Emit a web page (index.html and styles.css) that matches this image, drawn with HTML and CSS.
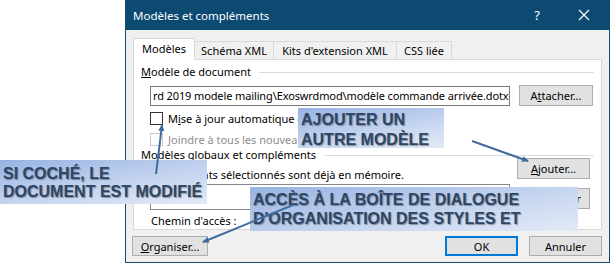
FILE: index.html
```html
<!DOCTYPE html>
<html lang="fr">
<head>
    <meta charset="UTF-8">
    <title>Modèles et compléments</title>
    <link rel="stylesheet" href="styles.css">
</head>
<body>
    <div class="dialog">
        <div class="titlebar">
            <span class="title">Modèles et compléments</span>
            <span class="help">?</span>
            <svg class="close" width="12" height="12" viewBox="0 0 12 12">
                <path d="M1 1 L11 11 M11 1 L1 11" stroke="#fff" stroke-width="1.2" fill="none"/>
            </svg>
        </div>

        <div class="tabs">
            <div class="tab active">Modèles</div>
            <div class="tab tab-xml">Schéma XML</div>
            <div class="tab tab-kits">Kits d'extension XML</div>
            <div class="tab tab-css">CSS liée</div>
        </div>

        <div class="panel">
            <div class="group-label"><span><u>M</u>odèle de document</span><div class="rule"></div></div>
            <div class="row-doc">
                <div class="textbox">rd 2019 modele mailing\Exoswrdmod\modèle commande arrivée.dotx</div>
                <button class="btn btn-attach">A<u>t</u>tacher...</button>
            </div>
            <label class="check"><span class="box"></span>M<u>i</u>se à jour automatique des styles de document</label>
            <label class="check disabled"><span class="box"></span>Joindre à tous les nouveaux messages électroniques</label>

            <div class="group-label second"><span>Mo<u>d</u>èles globaux et compléments</span><div class="rule"></div></div>
            <div class="globals">
                <div class="globals-left">
                    <div class="note">Les éléments sélectionnés sont déjà en mémoire.</div>
                    <div class="listbox"></div>
                    <div class="path">Chemin d'accès :</div>
                </div>
                <div class="globals-right">
                    <button class="btn"><u>A</u>jouter...</button>
                    <button class="btn btn-second">Supprimer</button>
                </div>
            </div>
        </div>

        <div class="footer">
            <button class="btn btn-organise"><u>O</u>rganiser...</button>
            <div class="spacer"></div>
            <button class="btn btn-ok">OK</button>
            <button class="btn">Annuler</button>
        </div>
    </div>

    <!-- bulles d'annotation -->
    <div class="callout callout-ajouter">AJOUTER UN<br>AUTRE MODÈLE</div>
    <div class="callout callout-coche">SI COCHÉ, LE<br>DOCUMENT EST MODIFIÉ</div>
    <div class="callout callout-acces">ACCÈS À LA BOÎTE DE DIALOGUE<br>D'ORGANISATION DES STYLES ET</div>

    <svg class="arrows" width="613" height="264" viewBox="0 0 613 264">
        <defs>
            <marker id="tip" markerWidth="7" markerHeight="6" refX="6" refY="3" orient="auto" markerUnits="userSpaceOnUse">
                <path d="M0 0 L7 3 L0 6 Z" fill="#3f6c9c"/>
            </marker>
        </defs>
        <line x1="156" y1="174" x2="162" y2="125" stroke="#3f6c9c" stroke-width="2" marker-end="url(#tip)"/>
        <line x1="472" y1="141" x2="528" y2="161" stroke="#3f6c9c" stroke-width="2" marker-end="url(#tip)"/>
        <line x1="293" y1="205" x2="203" y2="242" stroke="#3f6c9c" stroke-width="2" marker-end="url(#tip)"/>
    </svg>
</body>
</html>
```

FILE: styles.css
```css
body {
    margin: 0;
    width: 613px;
    height: 264px;
    overflow: hidden;
    position: relative;
    background-color: #fff;
    font-family: "Noto Sans", "Open Sans", sans-serif;
    font-size: 11px;
    color: #000;
}

.dialog {
    margin-left: 125px;
    width: 485px;
    height: 263px;
    box-sizing: border-box;
    border: 1px solid #1c4a6e;
    border-top: none;
    background-color: #f0f0f0;
}

.titlebar {
    height: 30px;
    background-color: #0d4a72;
    color: #fff;
    display: flex;
    align-items: center;
    padding-left: 8px;
    margin-left: -1px;
    margin-right: -1px;
}

.title {
    font-size: 11.5px;
    flex: 1;
}

.help {
    font-size: 13px;
    margin-right: 38px;
}

.close {
    margin-right: 20px;
}

.tabs {
    display: flex;
    align-items: flex-end;
    margin-top: 8px;
    margin-left: 7px;
    height: 21px;
    position: relative;
    z-index: 2;
}

.tab {
    height: 18px;
    box-sizing: border-box;
    border: 1px solid #d9d9d9;
    border-bottom: none;
    border-left: none;
    line-height: 17px;
    text-align: center;
    background-color: #f0f0f0;
}

.tab.active {
    height: 22px;
    width: 62px;
    margin-bottom: -1px;
    border-left: 1px solid #d9d9d9;
    background-color: #fff;
    line-height: 20px;
}

.tab-xml {
    width: 79px;
}

.tab-kits {
    width: 123px;
}

.tab-css {
    width: 55px;
}

.panel {
    margin: 0 7px;
    height: 171px;
    box-sizing: border-box;
    border: 1px solid #d9d9d9;
    background-color: #fff;
    padding: 0 7px;
}

.group-label {
    display: flex;
    align-items: center;
    height: 16px;
    line-height: 16px;
    margin-top: 4px;
}

.group-label.second {
    margin-top: 1px;
}

.rule {
    flex: 1;
    border-top: 1px solid #dcdcdc;
    margin-left: 8px;
    margin-top: 1px;
}

.row-doc {
    display: flex;
    margin-top: 5px;
    padding-left: 9px;
}

.textbox {
    width: 360px;
    height: 20px;
    box-sizing: border-box;
    margin-top: 1px;
    border: 1px solid #7a7a7a;
    padding-left: 2px;
    line-height: 18px;
    letter-spacing: -0.12px;
    white-space: nowrap;
    overflow: hidden;
}

.btn {
    font-family: inherit;
    font-size: 11px;
    width: 73px;
    height: 21px;
    padding: 0;
    background-color: #e1e1e1;
    border: 1px solid #adadad;
    color: #000;
}

.btn-attach {
    margin-left: 9px;
    width: 74px;
}

.check {
    display: flex;
    align-items: center;
    height: 13px;
    margin-top: 6px;
    padding-left: 9px;
    white-space: nowrap;
}

.check .box {
    width: 13px;
    height: 13px;
    box-sizing: border-box;
    border: 1px solid #333;
    margin-right: 5px;
    background-color: #fff;
}

.check.disabled {
    margin-top: 8px;
    color: #8d8d8d;
}

.check.disabled .box {
    border-color: #cccccc;
}

.globals {
    display: flex;
    margin-top: -5px;
    padding-left: 9px;
}

.globals-left {
    width: 360px;
}

.note {
    margin-top: 9px;
    height: 16px;
    line-height: 16px;
}

.listbox {
    margin-top: 1px;
    height: 26px;
    box-sizing: border-box;
    border: 1px solid #828790;
}

.path {
    margin-top: 3px;
    line-height: 16px;
    padding-left: 1px;
}

.globals-right {
    margin-left: 7px;
    display: flex;
    flex-direction: column;
}

.btn-second {
    margin-top: 9px;
}

.footer {
    display: flex;
    margin-top: 6px;
    padding: 0 7px 0 6px;
}

.footer .btn {
    height: 20px;
}

.btn-organise {
    width: 76px;
}

.spacer {
    flex: 1;
}

.btn-ok {
    border: 2px solid #0078d7;
    margin-right: 11px;
}

.callout {
    position: absolute;
    box-sizing: border-box;
    background: linear-gradient(170deg, #98b3e3 0%, #c4d4ef 55%, #e3eaf7 100%);
    font-family: "Liberation Sans", Arial, sans-serif;
    font-weight: bold;
    font-size: 16px;
    line-height: 19px;
    color: #2d4666;
    text-shadow: 1px 1px 1px rgba(0, 0, 0, 0.35);
    white-space: nowrap;
    overflow: hidden;
    padding-left: 3px;
    z-index: 5;
}

.callout-ajouter {
    left: 298px;
    top: 108px;
    width: 146px;
    height: 40px;
    padding-top: 2px;
    line-height: 20px;
}

.callout-coche {
    left: 0;
    top: 160px;
    width: 207px;
    height: 44px;
    padding-top: 5px;
    line-height: 18px;
}

.callout-acces {
    left: 250px;
    top: 187px;
    width: 328px;
    height: 44px;
    padding-top: 3px;
}

.arrows {
    position: absolute;
    left: 0;
    top: 0;
    z-index: 6;
    pointer-events: none;
}
```
